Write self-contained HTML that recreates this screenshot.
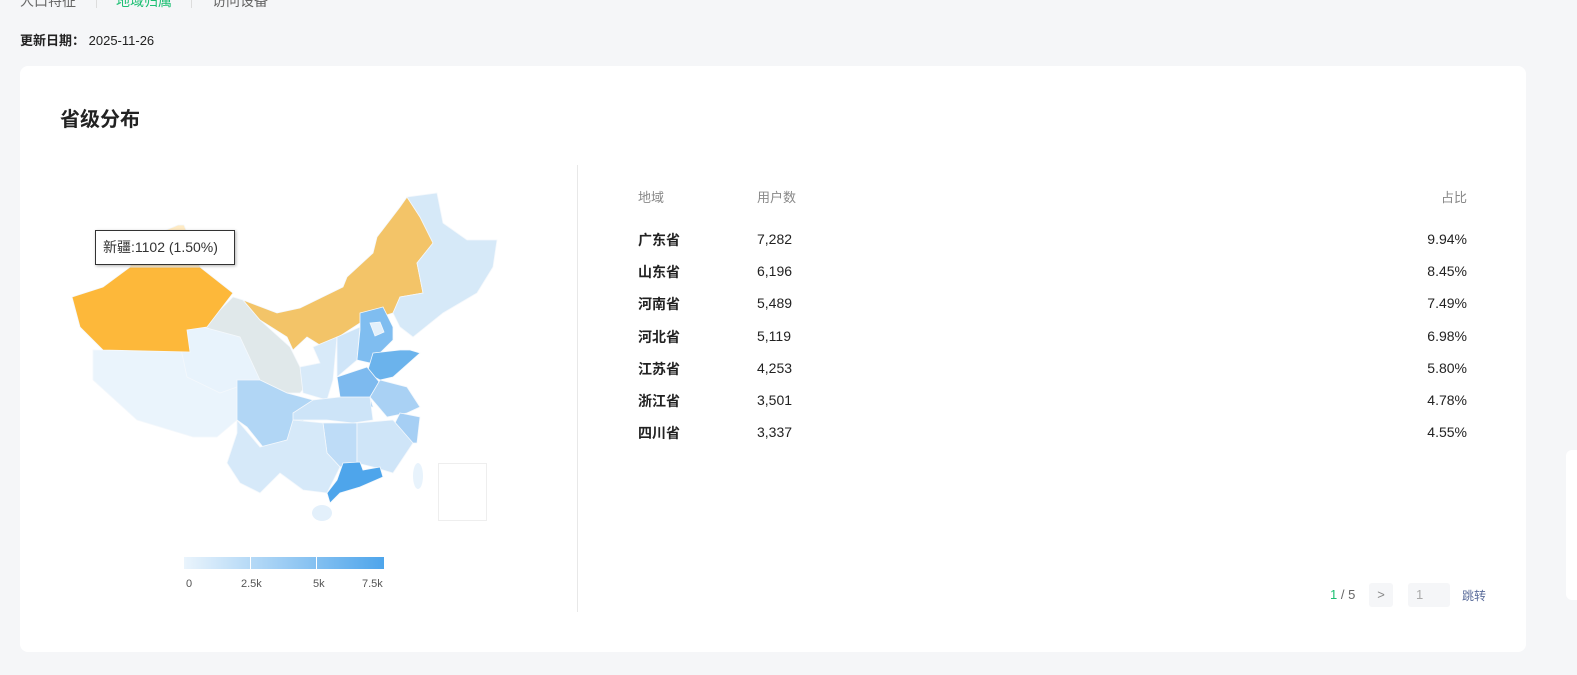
<!DOCTYPE html>
<html><head><meta charset="utf-8"><style>
*{margin:0;padding:0;box-sizing:border-box}
body{width:1577px;height:675px;background:#F5F6F8;position:relative;overflow:hidden;font-family:"Liberation Sans","Noto Sans CJK SC",sans-serif;color:#222}
.a{position:absolute;white-space:nowrap}
.card{position:absolute;left:20px;top:66px;width:1506px;height:586px;background:#fff;border-radius:8px}
.hd{color:#888;font-size:13px}
.r{font-size:14px;line-height:16px}
.n{font-weight:bold;color:#222}
</style></head><body>
<div class="a" style="left:20px;top:-9px;font-size:14px;color:#666">人口特征</div>
<div class="a" style="left:96px;top:-6px;width:1px;height:14px;background:#ddd"></div>
<div class="a" style="left:116px;top:-9px;font-size:14px;color:#1DBF73">地域归属</div>
<div class="a" style="left:191px;top:-6px;width:1px;height:14px;background:#ddd"></div>
<div class="a" style="left:212px;top:-9px;font-size:14px;color:#666">访问设备</div>
<div class="a" style="left:20px;top:30px;font-size:13px"><b>更新日期：</b> 2025-11-26</div>
<div class="card"></div>
<div class="a" style="left:60px;top:103px;font-size:20px;font-weight:bold;color:#222">省级分布</div>
<div class="a" style="left:577px;top:165px;width:1px;height:447px;background:#e8e8e8"></div>
<svg class="a" style="left:0;top:0" width="600" height="620">
<g stroke="#f4f8fc" stroke-width="0.8">
<polygon fill="#EAF4FC" points="93,350 190,352 180,330 207,327 233,347 243,377 237,420 217,437 193,437 137,420 93,380"/>
<polygon fill="#E8F3FC" points="177,330 207,327 240,337 273,367 260,380 237,387 220,393 187,377"/>
<polygon fill="#E0E8EA" points="203,327 233,297 243,300 260,320 290,347 300,367 320,363 317,373 300,393 287,393 260,380 240,337"/>
<polygon fill="#F3C468" points="243,300 277,313 300,308 343,287 347,277 373,253 377,237 400,207 407,197 420,217 433,243 417,263 423,293 400,297 393,313 360,323 323,347 307,337 293,350 287,337 260,320"/>
<polygon fill="#D6E9F8" points="407,197 437,193 443,223 467,240 497,240 493,267 477,293 443,313 413,337 400,327 393,313 400,297 423,293 417,263 433,243 420,217"/>
<polygon fill="#D8EAF9" points="313,347 337,337 333,380 327,400 303,393 300,367 320,363"/>
<polygon fill="#CFE5F8" points="337,337 360,327 357,360 337,377"/>
<polygon fill="#7FBDF0" points="360,313 383,307 393,327 393,340 370,363 357,360 360,330"/>
<polygon fill="#E3F0FB" points="370,323 380,322 384,332 375,336"/>
<polygon fill="#6BB3EC" points="373,353 400,350 410,350 420,353 393,377 380,380 367,373"/>
<polygon fill="#7DBAEF" points="337,377 367,367 380,383 370,397 373,407 360,407 340,397"/>
<polygon fill="#A9D1F4" points="380,380 407,387 420,407 407,413 387,417 370,397"/>
<polygon fill="#A6CFF4" points="400,413 420,417 417,443 400,443 393,427"/>
<polygon fill="#B1D6F5" points="237,380 260,380 287,393 313,400 310,413 287,440 263,447 247,427 237,420"/>
<polygon fill="#CDE4F8" points="313,400 340,397 370,397 373,420 353,423 327,420 293,420 293,413"/>
<polygon fill="#BEDCF7" points="323,423 357,423 357,463 340,467 327,453"/>
<polygon fill="#CFE5F8" points="357,423 393,420 413,443 393,473 373,467 357,463"/>
<polygon fill="#D6E9F9" points="237,420 260,447 287,440 293,420 323,423 327,453 340,467 327,493 303,490 280,473 260,493 240,483 227,463 237,433"/>
<polygon fill="#4EA5EB" points="343,463 360,462 363,470 380,467 383,477 360,487 340,493 330,503 327,493 337,480"/>
<polygon fill="#FDB83A" points="72,297 103,287 130,267 200,267 233,293 207,327 187,330 190,352 103,350 80,327"/>
<polygon fill="#FFEBC4" points="130,267 135,243 178,225 184,225 195,252 200,267"/>
</g>
<ellipse cx="322" cy="513" rx="10" ry="8" fill="#E3F0FB"/>
<ellipse cx="418" cy="476" rx="5" ry="13" fill="#E8F3FC"/>
<rect x="438.5" y="463.5" width="48" height="57" fill="#fff" stroke="#eee"/>
<defs><linearGradient id="g"><stop offset="0" stop-color="#EAF4FC"/><stop offset="1" stop-color="#4EA5EB"/></linearGradient></defs>
<rect x="184" y="557" width="200" height="12" fill="url(#g)"/>
<rect x="250" y="557" width="1" height="12" fill="#fff"/>
<rect x="316" y="557" width="1" height="12" fill="#fff"/>
</svg>
<div class="a" style="left:95px;top:230px;width:140px;height:35px;background:#fff;border:1px solid #333;box-shadow:1px 1px 3px rgba(0,0,0,.3);font-size:14px;line-height:33px;padding-left:7px;color:#333">新疆:1102 (1.50%)</div>
<div class="a" style="left:186px;top:578px;font-size:11px;color:#555">0</div>
<div class="a" style="left:241px;top:578px;font-size:11px;color:#555">2.5k</div>
<div class="a" style="left:313px;top:578px;font-size:11px;color:#555">5k</div>
<div class="a" style="left:362px;top:578px;font-size:11px;color:#555">7.5k</div>
<div class="a hd" style="left:638px;top:187px">地域</div>
<div class="a hd" style="left:757px;top:187px">用户数</div>
<div class="a hd" style="right:110px;top:187px">占比</div>
<div class="a r n" style="left:638px;top:232px">广东省</div><div class="a r" style="left:757px;top:231px">7,282</div><div class="a r" style="right:110px;top:231px">9.94%</div>
<div class="a r n" style="left:638px;top:264px">山东省</div><div class="a r" style="left:757px;top:263px">6,196</div><div class="a r" style="right:110px;top:263px">8.45%</div>
<div class="a r n" style="left:638px;top:296px">河南省</div><div class="a r" style="left:757px;top:295px">5,489</div><div class="a r" style="right:110px;top:295px">7.49%</div>
<div class="a r n" style="left:638px;top:329px">河北省</div><div class="a r" style="left:757px;top:328px">5,119</div><div class="a r" style="right:110px;top:328px">6.98%</div>
<div class="a r n" style="left:638px;top:361px">江苏省</div><div class="a r" style="left:757px;top:360px">4,253</div><div class="a r" style="right:110px;top:360px">5.80%</div>
<div class="a r n" style="left:638px;top:393px">浙江省</div><div class="a r" style="left:757px;top:392px">3,501</div><div class="a r" style="right:110px;top:392px">4.78%</div>
<div class="a r n" style="left:638px;top:425px">四川省</div><div class="a r" style="left:757px;top:424px">3,337</div><div class="a r" style="right:110px;top:424px">4.55%</div>
<div class="a" style="left:1330px;top:587px;font-size:13px;color:#666"><span style="color:#1DBF73">1</span> / 5</div>
<div class="a" style="left:1369px;top:583px;width:24px;height:24px;background:#F5F6F8;border-radius:3px;color:#888;font-size:13px;text-align:center;line-height:24px">&gt;</div>
<div class="a" style="left:1408px;top:583px;width:42px;height:24px;background:#F5F6F8;border-radius:3px;color:#aaa;font-size:13px;line-height:24px;padding-left:8px">1</div>
<div class="a" style="left:1462px;top:587px;font-size:12px;color:#5a6c9a">跳转</div>
<div class="a" style="left:1566px;top:450px;width:11px;height:150px;background:#fff;border-radius:6px 0 0 6px"></div>
</body></html>
